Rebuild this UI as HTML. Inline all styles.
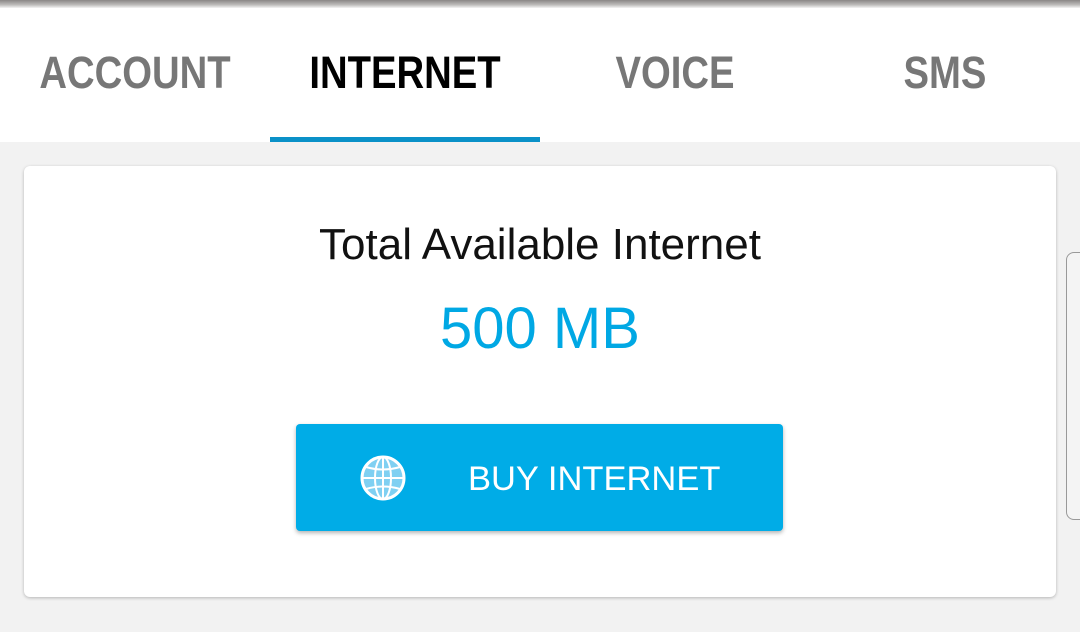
<!DOCTYPE html>
<html><head><style>
body{margin:0;width:1080px;height:632px;overflow:hidden;background:#f2f2f2;font-family:"Liberation Sans",sans-serif;position:relative}
.top{position:absolute;left:0;top:0;width:1080px;height:142px;background:#fff}
.bar{position:absolute;left:0;top:0;width:1080px;height:8px;background:linear-gradient(#8a8786,#bdbbba 60%,#f4f4f4)}
.tab{position:absolute;top:50px;width:270px;text-align:center;font-weight:bold;font-size:45px;color:#777;line-height:46px;transform:scaleX(0.85)}
.ul{position:absolute;left:270px;top:137px;width:270px;height:5px;background:#0a91c8}
.card{position:absolute;left:24px;top:166px;width:1032px;height:431px;background:#fff;border-radius:6px;box-shadow:0 1px 3px rgba(0,0,0,.25)}
.t1{position:absolute;left:0;width:1080px;top:219px;text-align:center;font-size:44px;color:#111;line-height:52px}
.t2{position:absolute;left:0;width:1080px;top:296px;text-align:center;font-size:58px;color:#00a8e4;line-height:66px}
.btn{position:absolute;left:296px;top:424px;width:487px;height:107px;background:#00ace7;border-radius:4px;box-shadow:0 2px 4px rgba(0,0,0,.3)}
.bt{position:absolute;left:468px;top:458px;font-size:34.5px;color:#fff;line-height:42px}
.side{position:absolute;left:1066px;top:252px;width:30px;height:266px;border:1px solid #999;border-radius:8px;background:#f4f4f4}
</style></head><body>
<div class="top"></div><div class="bar"></div>
<div class="tab" style="left:0">ACCOUNT</div>
<div class="tab" style="left:270px;color:#000">INTERNET</div>
<div class="tab" style="left:540px">VOICE</div>
<div class="tab" style="left:810px">SMS</div>
<div class="ul"></div>
<div class="side"></div>
<div class="card"></div>
<div class="t1">Total Available Internet</div>
<div class="t2">500 MB</div>
<div class="btn"></div>
<svg style="position:absolute;left:358px;top:453px" width="50" height="50" viewBox="0 0 50 50">
<circle cx="25" cy="25" r="21" fill="#7fd0f2" stroke="#fff" stroke-width="3"/>
<g fill="none" stroke="#fff" stroke-width="2">
<ellipse cx="25" cy="25" rx="8" ry="21"/>
<line x1="25" y1="4" x2="25" y2="46"/>
<line x1="4" y1="25" x2="46" y2="25"/>
<path d="M8 14 Q25 19 42 14"/><path d="M8 36 Q25 31 42 36"/>
</g></svg>
<div class="bt">BUY INTERNET</div>
</body></html>
